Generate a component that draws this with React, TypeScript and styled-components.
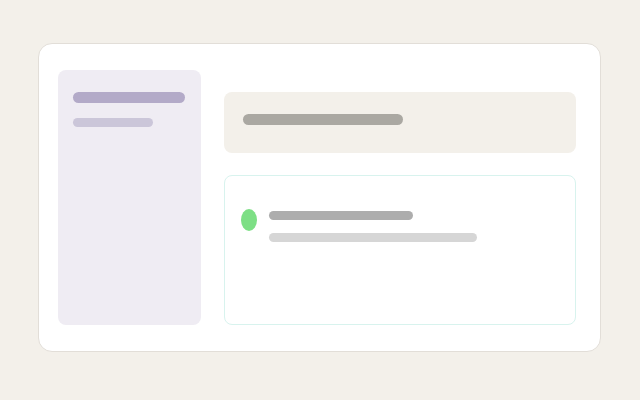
import React from "react"
import styled, { createGlobalStyle } from "styled-components"

const GlobalStyle = createGlobalStyle`
  html, body {
    margin: 0;
    padding: 0;
    background-color: #f3f0ea;
    font-family: "Liberation Sans", Arial, sans-serif;
  }
`

const Page = styled.div`
  width: 640px;
  height: 400px;
  box-sizing: border-box;
  padding: 43px 0 0 38px;
`

const Card = styled.div`
  width: 563px;
  height: 309px;
  box-sizing: border-box;
  background-color: #fff;
  border: 1px solid #e2ded8;
  border-radius: 14px;
  padding: 26px 24px 26px 19px;
  display: grid;
  grid-template-columns: 143px 1fr;
  column-gap: 23px;
`

const Sidebar = styled.div`
  background-color: #efecf3;
  border-radius: 8px;
  padding: 22px 15px;
  display: flex;
  flex-direction: column;
  gap: 15px;
`

const Bar = styled.div<{ $w: number; $h: number; $c: string }>`
  width: ${(p) => p.$w}px;
  height: ${(p) => p.$h}px;
  border-radius: ${(p) => p.$h / 2}px;
  background-color: ${(p) => p.$c};
`

const Main = styled.div`
  padding-top: 22px;
  display: flex;
  flex-direction: column;
  gap: 22px;
`

const Header = styled.div`
  height: 61px;
  box-sizing: border-box;
  background-color: #f3f0ea;
  border-radius: 8px;
  padding: 22px 19px 0;
`

const Panel = styled.div`
  flex: 1;
  box-sizing: border-box;
  border: 1px solid #d8f3ee;
  border-radius: 8px;
  padding: 33px 16px 0;
`

const Item = styled.div`
  display: flex;
  align-items: flex-start;
  gap: 12px;
`

const Dot = styled.div`
  width: 16px;
  height: 22px;
  border-radius: 50%;
  background-color: #7ddf85;
  flex-shrink: 0;
`

const Lines = styled.div`
  padding-top: 2px;
  display: flex;
  flex-direction: column;
  gap: 13px;
`

const App: React.FC = () => {
  return (
    <Page>
      <GlobalStyle />
      <Card>
        <Sidebar>
          <Bar $w={112} $h={11} $c="#b3aac8" />
          <Bar $w={80} $h={9} $c="#cbc6d9" />
        </Sidebar>
        <Main>
          <Header>
            <Bar $w={160} $h={11} $c="#aaa8a2" />
          </Header>
          <Panel>
            <Item>
              <Dot />
              <Lines>
                <Bar $w={144} $h={9} $c="#adadad" />
                <Bar $w={208} $h={9} $c="#d6d6d6" />
              </Lines>
            </Item>
          </Panel>
        </Main>
      </Card>
    </Page>
  )
}

export default App
